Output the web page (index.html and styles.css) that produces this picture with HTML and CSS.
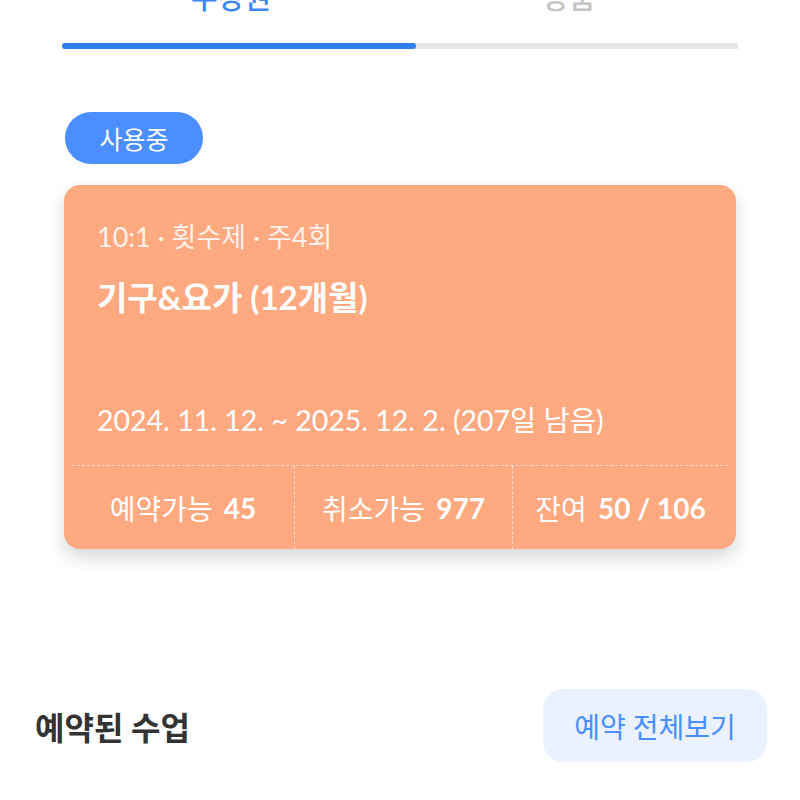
FILE: index.html
```html
<!DOCTYPE html>
<html lang="ko">
<head>
<meta charset="utf-8">
<link rel="stylesheet" href="styles.css">
</head>
<body>
<div class="page">
  <div class="tabs">
    <div class="tab-labels">
      <div class="tab active">수강권</div>
      <div class="tab">상품</div>
    </div>
    <div class="tab-bar"><div class="tab-bar-fill"></div></div>
  </div>

  <div class="pass-section">
    <span class="badge">사용중</span>
    <div class="card">
      <div class="card-body">
        <div class="meta">10:1 · 횟수제 · 주4회</div>
        <div class="title">기구&amp;요가 (12개월)</div>
        <div class="period">2024. 11. 12. ~ 2025. 12. 2. (207일 남음)</div>
      </div>
      <div class="stats">
        <div class="stat">예약가능 <b>45</b></div>
        <div class="stat">취소가능 <b>977</b></div>
        <div class="stat">잔여 <b>50 / 106</b></div>
      </div>
    </div>
  </div>

  <div class="booked">
    <h2 class="booked-title">예약된 수업</h2>
    <button class="booked-btn">예약 전체보기</button>
  </div>
</div>
</body>
</html>
```

FILE: styles.css
```css
* { box-sizing: border-box; }
html, body { margin: 0; padding: 0; background: #fff; }
body {
  font-family: Lato, "Noto Sans CJK KR", sans-serif;
  color: #222;
  overflow: hidden;
}
.page { width: 800px; height: 800px; overflow: hidden; }

.tabs { padding: 0 62px; margin-top: -20px; }
.tab-labels { display: flex; }
.tab {
  flex: 1;
  text-align: center;
  font-size: 29px;
  line-height: 36px;
  color: #c4c4c4;
  font-weight: 500;
}
.tab.active { color: #3d86f5; }
.tab-bar {
  margin-top: 27px;
  height: 6px;
  background: #e6e6e6;
}
.tab-bar-fill {
  width: 52.4%;
  height: 100%;
  background: #2f7ff5;
  border-radius: 3px;
}

.pass-section { padding: 63px 64px 0; }
.badge {
  display: inline-flex;
  align-items: center;
  justify-content: center;
  width: 138px;
  height: 52px;
  border-radius: 26px;
  background: #4b8eff;
  color: #fff;
  font-size: 25px;
  margin-left: 1px;
}
.card {
  margin-top: 21px;
  height: 364px;
  background: #ffa981;
  border-radius: 16px;
  box-shadow: 0 8px 18px rgba(0, 0, 0, 0.16);
  display: flex;
  flex-direction: column;
  color: #fff;
}
.card-body {
  flex: 1;
  display: flex;
  flex-direction: column;
  padding: 34px 33px 26px;
}
.meta { font-size: 27px; line-height: 36px; color: #fff2ea; }
.title { margin-top: 21px; font-size: 33px; line-height: 42px; font-weight: 700; }
.period { margin-top: auto; font-size: 28.5px; line-height: 38px; }

.stats {
  height: 84px;
  margin: 0 8px;
  border-top: 1.5px dashed rgba(255, 255, 255, 0.55);
  display: grid;
  grid-template-columns: 222px 218px 1fr;
}
.stat {
  display: flex;
  align-items: center;
  justify-content: center;
  font-size: 28px;
  color: #fff;
  white-space: pre;
}
.stat b { font-weight: 700; margin-left: 4px; }
.stat + .stat { border-left: 1.5px dashed rgba(255, 255, 255, 0.55); }

.booked {
  margin-top: 140px;
  padding: 0 33px 0 35px;
  display: flex;
  align-items: center;
  justify-content: space-between;
}
.booked-title {
  margin: 0;
  font-size: 32px;
  font-weight: 700;
  color: #333;
}
.booked-btn {
  width: 224px;
  height: 73px;
  border: none;
  border-radius: 20px;
  background: #eaf2ff;
  color: #4b8eff;
  font-family: Lato, "Noto Sans CJK KR", sans-serif;
  font-size: 28px;
}
```
